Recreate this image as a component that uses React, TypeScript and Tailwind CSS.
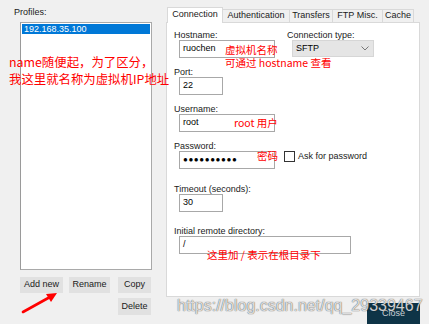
import { useState } from 'react';

const tabs = [
  { label: 'Authentication', w: 'w-[67px]' },
  { label: 'Transfers', w: 'w-[43px]' },
  { label: 'FTP Misc.', w: 'w-[50px]' },
  { label: 'Cache', w: 'w-[31px]' },
];

function Field({ className, children }: { className?: string; children?: React.ReactNode }) {
  return (
    <div
      className={`ml-[5px] h-[18px] border border-[#a8a8a8] bg-white pl-[3px] flex items-center text-black ${className ?? ''}`}
    >
      {children}
    </div>
  );
}

function Label({ children, className }: { children: React.ReactNode; className?: string }) {
  return <div className={`leading-[10px] h-[10px] ${className ?? ''}`}>{children}</div>;
}

function Note({ children, className }: { children: React.ReactNode; className?: string }) {
  return (
    <div
      className={`absolute whitespace-nowrap text-[#ff0000] font-['Noto_Sans_CJK_SC',sans-serif] ${className ?? ''}`}
    >
      {children}
    </div>
  );
}

export default function App() {
  const [selected] = useState('192.168.35.100');

  return (
    <div className="relative w-[429px] h-[324px] overflow-hidden bg-[#f0f0f0] text-[9px] text-[#1a1a1a] font-['Liberation_Sans',Arial,sans-serif]">
      <div className="flex">
        {/* profiles column */}
        <div className="w-[166px] pl-[14px] pt-[7px]">
          <Label>Profiles:</Label>
          <div className="ml-[6px] mt-[5px] w-[132px] h-[248px] bg-white border border-[#a9a9a9] border-l-[#9a9a9a] p-px">
            <div className="h-[10px] bg-[#0078d7] text-white leading-[10px] pl-[2px]">{selected}</div>
          </div>
          <div className="ml-[6px] mt-[7px] flex">
            <div className="w-[43px] h-[16px] bg-[#e1e1e1] flex items-center justify-center">Add new</div>
            <div className="ml-[6px] w-[41px] h-[16px] bg-[#e1e1e1] flex items-center justify-center">Rename</div>
            <div className="ml-[8px] flex flex-col gap-[5px]">
              <div className="w-[33px] h-[16px] bg-[#e1e1e1] flex items-center justify-center">Copy</div>
              <div className="w-[33px] h-[17px] bg-[#e1e1e1] flex items-center justify-center">Delete</div>
            </div>
          </div>
        </div>

        {/* settings column */}
        <div className="w-[254px] pt-[7px] flex flex-col">
          <div className="flex items-end h-[15px] pl-px">
            <div className="relative z-10 -mb-px w-[56px] h-[16px] bg-white border-t border-l border-r border-[#d9d9d9] flex items-center justify-center pb-[2px]">
              Connection
            </div>
            {tabs.map((t) => (
              <div
                key={t.label}
                className={`${t.w} h-[13px] border-t border-r border-[#d9d9d9] flex items-center justify-center`}
              >
                {t.label}
              </div>
            ))}
          </div>
          <div className="h-[275px] bg-white border border-[#d9d9d9] pl-[7px] pt-[7px]">
            <div className="flex">
              <div className="w-[113px]">
                <Label>Hostname:</Label>
                <Field className="w-[96px]">ruochen</Field>
              </div>
              <div>
                <Label>Connection type:</Label>
                <div className="ml-[5px] w-[82px] h-[17px] bg-[#e5e5e5] border border-[#d6d6d6] flex items-center justify-between pl-[3px] pr-[4px] text-black">
                  <span>SFTP</span>
                  <svg width="8" height="5" viewBox="0 0 8 5" fill="none" stroke="#6b6b6b" strokeWidth="0.9">
                    <path d="M0.5 0.5 L4 4 L7.5 0.5" />
                  </svg>
                </div>
              </div>
            </div>

            <Label className="mt-[9px]">Port:</Label>
            <Field className="w-[44px]">22</Field>

            <Label className="mt-[9px]">Username:</Label>
            <Field className="w-[96px]">root</Field>

            <Label className="mt-[9px]">Password:</Label>
            <div className="flex items-start">
              <Field className="w-[96px]">
                <span className="text-[8px] tracking-[0.6px] leading-none text-black">●●●●●●●●●●</span>
              </Field>
              <div className="ml-[9px] w-[11px] h-[11px] border border-[#333] bg-white" />
              <span className="ml-[3px] leading-[11px]">Ask for password</span>
            </div>

            <Label className="mt-[15px]">Timeout (seconds):</Label>
            <Field className="w-[44px]">30</Field>

            <Label className="mt-[14px]">Initial remote directory:</Label>
            <Field className="w-[172px]">/</Field>
          </div>
          <div className="mt-[6px] self-end w-[53px] h-[26px] bg-[#0e3447] text-[#c9cfd3] flex justify-center pt-[4px]">
            Close
          </div>
        </div>
      </div>

      {/* annotations */}
      <Note className="left-[9px] top-[54px] text-[12.4px] leading-[17px]">
        name随便起，为了区分，
        <br />
        我这里就名称为虚拟机IP地址
      </Note>
      <Note className="left-[225px] top-[43px] text-[10.5px] leading-[13px]">
        虚拟机名称
        <br />
        可通过 hostname 查看
      </Note>
      <Note className="left-[234px] top-[116px] text-[10.5px] leading-[14px]">root 用户</Note>
      <Note className="left-[257px] top-[149px] text-[10.5px] leading-[14px]">密码</Note>
      <Note className="left-[207px] top-[248px] text-[10.5px] leading-[14px]">这里加 / 表示在根目录下</Note>

      <svg className="absolute left-0 top-0" width="429" height="324" viewBox="0 0 429 324" fill="none">
        <line x1="23" y1="312" x2="50" y2="297" stroke="#ff0000" strokeWidth="2.6" strokeLinecap="round" />
        <path d="M57 293 L46 294 L51 302 Z" fill="#ff0000" />
      </svg>

      <div className="absolute left-[177px] top-[296px] whitespace-nowrap text-[16px] leading-[20px] font-['Liberation_Sans',Arial,sans-serif] text-white/80 [text-shadow:0_0_1px_rgba(0,0,0,0.6),0_0_1px_rgba(0,0,0,0.4)]">
        https://blog.csdn.net/qq_29339467
      </div>
    </div>
  );
}
